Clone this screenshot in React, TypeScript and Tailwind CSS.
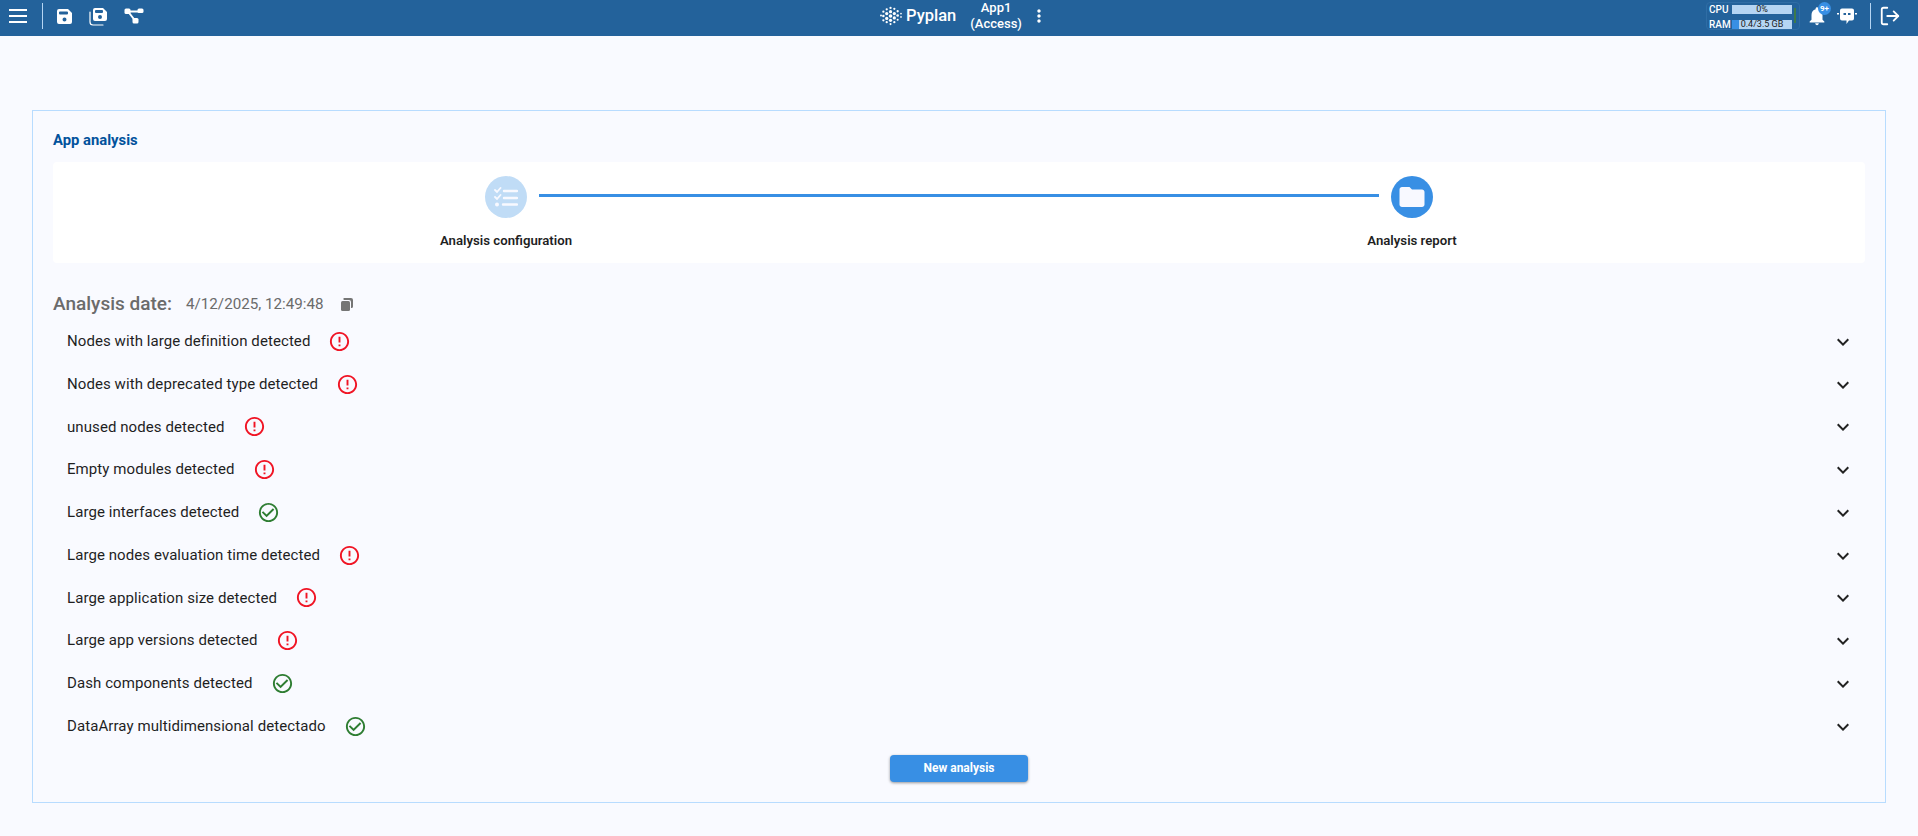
import React from "react";
import { MdCheckCircleOutline, MdErrorOutline, MdExpandMore, MdFolder, MdMoreVert, MdNotifications } from "react-icons/md";
import { LuLogOut } from "react-icons/lu";

const rows = [
  { label: "Nodes with large definition detected", ok: false },
  { label: "Nodes with deprecated type detected", ok: false },
  { label: "unused nodes detected", ok: false },
  { label: "Empty modules detected", ok: false },
  { label: "Large interfaces detected", ok: true },
  { label: "Large nodes evaluation time detected", ok: false },
  { label: "Large application size detected", ok: false },
  { label: "Large app versions detected", ok: false },
  { label: "Dash components detected", ok: true },
  { label: "DataArray multidimensional detectado", ok: true },
];

const logoDots = [
  [1.5, 10, 1], [4, 6, 1.2], [4, 10.5, 1.3], [4, 15, 1.2], [7.5, 3.5, 1.2], [7.5, 8, 1.7], [7.5, 13, 1.7], [7.5, 17, 1.2],
  [11.5, 2, 1.2], [11.5, 6, 1.7], [11.5, 10.5, 1.9], [11.5, 15, 1.7], [11.5, 19, 1.1], [15.5, 3, 1.2], [15.5, 8, 1.7],
  [15.5, 12.5, 1.7], [15.5, 17, 1.2], [19, 5.500, 1.2], [19, 10, 1.4], [19, 14.5, 1.1], [22.5, 8, 0.9], [22.5, 11.5, 0.9],
];

function SaveIcon() {
  return (
    <svg width="17" height="17" viewBox="0 0 17 17" fill="white">
      <path
        fillRule="evenodd"
        d="M3 1h9l4 4v9a2 2 0 0 1-2 2H3a2 2 0 0 1-2-2V3a2 2 0 0 1 2-2zm1 2.500a1 1 0 0 0-1 1V5.500a1 1 0 0 0 1 1h7a1 1 0 0 0 1-1V4.500a1 1 0 0 0-1-1H4zM8.500 9.500a2 2 0 1 0 0 4 2 2 0 0 0 0-4z"
      />
    </svg>
  );
}

function SaveAllIcon() {
  return (
    <svg width="19" height="19" viewBox="0 0 19 19" fill="white">
      <path
        fillRule="evenodd"
        d="M6 1h8l4 4v7a2 2 0 0 1-2 2H6a2 2 0 0 1-2-2V3a2 2 0 0 1 2-2zm1 2a1 1 0 0 0-1 1v1a1 1 0 0 0 1 1h6a1 1 0 0 0 1-1V4a1 1 0 0 0-1-1H7zm4 5a2 2 0 1 0 0 4 2 2 0 0 0 0-4z"
      />
      <path d="M1 5v10a3 3 0 0 0 3 3h10" fill="none" stroke="white" strokeWidth="1.200" strokeLinecap="round" />
    </svg>
  );
}

function NodesIcon() {
  return (
    <svg width="20" height="16" viewBox="0 0 20 16" fill="white">
      <path d="M4 3.500h12M4 3.500l7 9" stroke="white" strokeWidth="2" fill="none" />
      <rect x="0.500" y="0.500" width="6" height="5.500" rx="1.500" />
      <rect x="13.500" y="0.500" width="6" height="4.500" rx="1.500" />
      <rect x="8.500" y="10" width="6" height="5.500" rx="1.500" />
    </svg>
  );
}

function BotIcon() {
  return (
    <svg width="20" height="19" viewBox="0 0 20 19" fill="white">
      <path
        fillRule="evenodd"
        d="M5 1.500h10a2 2 0 0 1 2 2v8a2 2 0 0 1-2 2h-3l-2.500 3.500v-3.500H5a2 2 0 0 1-2-2v-8a2 2 0 0 1 2-2zm1.500 4.500v2h2.500V6H6.500zm4.500 0v2h2.500V6H11z"
      />
      <rect x="0" y="6" width="2" height="1.500" />
      <rect x="18" y="6" width="2" height="1.500" />
    </svg>
  );
}

function ChecklistIcon() {
  return (
    <svg width="24" height="20" viewBox="0 0 24 20" fill="none" stroke="#f8f9ff" strokeLinecap="round">
      <path d="M1 3l2 2 3.500-4M1 10l2 2 3.500-4" strokeWidth="1.800" />
      <path d="M10 4h13M10 11h13M9 17.500h14" strokeWidth="2.400" />
      <circle cx="3" cy="17.500" r="2" fill="#f8f9ff" stroke="none" />
    </svg>
  );
}

function CopyIcon() {
  return (
    <svg width="12" height="13" viewBox="0 0 12 13" fill="#757575">
      <path d="M4 0h6a2 2 0 0 1 2 2v6.500a1.500 1.500 0 0 1-1.500 1.500H10V4a2 2 0 0 0-2-2H3a1 1 0 0 1 1-2z" />
      <rect x="0" y="3" width="9" height="10" rx="1.500" />
    </svg>
  );
}

function UsageBar({ label, text, fill }: { label: string; text: string; fill?: boolean }) {
  return (
    <div className="flex items-center h-[11px]">
      <span className="w-[23px] text-[10px] font-medium text-white">{label}</span>
      <div className="relative w-[60px] h-[9px] bg-[#b5d5f3] flex items-center justify-center">
        {fill && <div className="absolute left-0 top-0 h-full w-[7px] bg-[#388fe4]" />}
        <span className="relative text-[9px] leading-none text-[#1a1a1a]">{text}</span>
      </div>
    </div>
  );
}

export default function App() {
  return (
    <div className="min-h-[836px] bg-[#f9faff] font-['Roboto',sans-serif]">
      <header className="relative h-[36px] pb-[4px] bg-[#23629b] flex items-center justify-between">
        <div className="flex items-center">
          <div className="flex flex-col gap-[4px] ml-[9px] w-[18px]">
            <span className="h-[2px] bg-white" />
            <span className="h-[2px] bg-white" />
            <span className="h-[2px] bg-white" />
          </div>
          <div className="ml-[15px] w-px h-[26px] bg-[#b5d5f3]" />
          <div className="ml-[13px]"><SaveIcon /></div>
          <div className="ml-[16px]"><SaveAllIcon /></div>
          <div className="ml-[16px]"><NodesIcon /></div>
        </div>

        <div className="absolute left-[879px] top-0 h-[32px] flex items-center">
          <svg width="24" height="20" viewBox="0 0 24 21" fill="white">
            {logoDots.map(([x, y, r], i) => (
              <circle key={i} cx={x} cy={y} r={r} />
            ))}
          </svg>
          <span className="ml-[3px] text-[16.5px] font-medium text-white">Pyplan</span>
          <div className="ml-[14px] text-center text-[13px] leading-[16px] font-medium text-white">
            <div>App1</div>
            <div>(Access)</div>
          </div>
          <MdMoreVert size={20} color="white" className="ml-[7px]" />
        </div>

        <div className="flex items-center">
          <div className="flex flex-col gap-[4px] relative w-[94px] h-[28px] pt-[1px] pl-[2px] border border-[#2f6da5] rounded-[4px]">
            <UsageBar label="CPU" text="0%" />
            <UsageBar label="RAM" text="0.4/3.5 GB" fill />
            <div className="absolute right-[3px] top-[5px] w-[2px] h-[15px] bg-[#3d7a4a]" />
          </div>
          <div className="relative ml-[6px]">
            <MdNotifications size={22} color="white" />
            <span className="absolute left-[12px] top-[-3px] w-[13px] h-[13px] rounded-full bg-[#388fe4] text-white text-[8px] font-bold leading-[13px] text-center">9+</span>
          </div>
          <div className="ml-[9px]"><BotIcon /></div>
          <div className="ml-[13px] w-px h-[26px] bg-[#b5d5f3]" />
          <LuLogOut size={22} color="white" className="ml-[8px] mr-[17px]" />
        </div>
      </header>

      <div className="pt-[74px] px-[32px]">
        <main className="h-[693px] border border-[#b8dcff] px-[20px] pt-[19px]">
          <h2 className="text-[14.8px] leading-[20px] font-bold text-[#02529c]">App analysis</h2>

          <section className="mt-[12px] h-[101px] bg-white rounded-[4px] flex items-start pt-[14px] pl-[388px]">
            <div className="relative w-[130px] flex flex-col items-center">
              <div className="w-[42px] h-[42px] rounded-full bg-[#c0dcf6] flex items-center justify-center">
                <ChecklistIcon />
              </div>
              <span className="mt-[15px] text-[13.2px] leading-[16px] font-semibold whitespace-nowrap text-[#1f1f1f]">Analysis configuration</span>
            </div>
            <div className="w-[840px] h-[3px] mt-[18px] ml-[-32px] bg-[#388fe4]" />
            <div className="w-[130px] ml-[-32px] flex flex-col items-center">
              <div className="w-[42px] h-[42px] rounded-full bg-[#388fe4] flex items-center justify-center">
                <MdFolder size={30} color="#f8f9ff" />
              </div>
              <span className="mt-[15px] text-[13.2px] leading-[16px] font-semibold whitespace-nowrap text-[#1f1f1f]">Analysis report</span>
            </div>
          </section>

          <div className="mt-[29px] h-[24px] flex items-center">
            <span className="text-[19px] font-medium text-[#6b6b6b]">Analysis date:</span>
            <span className="ml-[14px] text-[15.2px] text-[#6b6b6b]">4/12/2025, 12:49:48</span>
            <span className="ml-[17px]"><CopyIcon /></span>
          </div>

          <ul className="mt-[4px]">
            {rows.map((row) => (
              <li key={row.label} className="h-[42.75px] flex items-center pl-[14px] pr-[10px]">
                <span className="text-[15px] text-[#1f1f1f] tracking-[0.08px]">{row.label}</span>
                {row.ok ? (
                  <MdCheckCircleOutline size={23} color="#2e7d32" className="ml-[18px]" />
                ) : (
                  <MdErrorOutline size={23} color="#f01424" className="ml-[18px]" />
                )}
                <MdExpandMore size={24} color="#222222" className="ml-auto mt-[1px]" />
              </li>
            ))}
          </ul>

          <div className="flex justify-center mt-[7px]">
            <button className="w-[138px] h-[27px] rounded-[4px] bg-[#388fe4] text-white text-[12px] font-bold shadow-[0_1px_3px_rgba(0,0,0,0.4)]">
              New analysis
            </button>
          </div>
        </main>
      </div>
    </div>
  );
}
